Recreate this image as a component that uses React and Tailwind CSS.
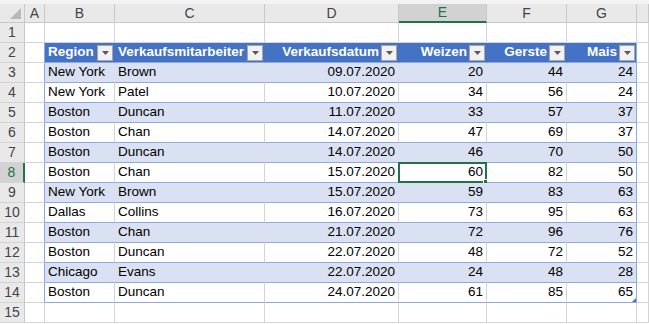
import React from 'react';

const font = { fontFamily: '"Liberation Sans", Arial, sans-serif' };

const colWidths = {
  A: 'w-[20px]',
  B: 'w-[70px]',
  C: 'w-[150px]',
  D: 'w-[134px]',
  E: 'w-[88px]',
  F: 'w-[80px]',
  G: 'w-[70px]',
  H: 'flex-1',
};

const letters = ['A', 'B', 'C', 'D', 'E', 'F', 'G', 'H'];

const headers = [
  { text: 'Region', right: false },
  { text: 'Verkaufsmitarbeiter', right: false },
  { text: 'Verkaufsdatum', right: true },
  { text: 'Weizen', right: true },
  { text: 'Gerste', right: true },
  { text: 'Mais', right: true },
];

const rows = [
  ['New York', 'Brown', '09.07.2020', 20, 44, 24],
  ['New York', 'Patel', '10.07.2020', 34, 56, 24],
  ['Boston', 'Duncan', '11.07.2020', 33, 57, 37],
  ['Boston', 'Chan', '14.07.2020', 47, 69, 37],
  ['Boston', 'Duncan', '14.07.2020', 46, 70, 50],
  ['Boston', 'Chan', '15.07.2020', 60, 82, 50],
  ['New York', 'Brown', '15.07.2020', 59, 83, 63],
  ['Dallas', 'Collins', '16.07.2020', 73, 95, 63],
  ['Boston', 'Chan', '21.07.2020', 72, 96, 76],
  ['Boston', 'Duncan', '22.07.2020', 48, 72, 52],
  ['Chicago', 'Evans', '22.07.2020', 24, 48, 28],
  ['Boston', 'Duncan', '24.07.2020', 61, 85, 65],
];

const FilterButton = () => (
  <div className="w-[16px] h-[16px] shrink-0 bg-[#f2f2f2] border border-[#a6a6a6] flex items-center justify-center">
    <svg width="7" height="4" viewBox="0 0 7 4">
      <polygon points="0,0 7,0 3.5,4" fill="#595959" />
    </svg>
  </div>
);

const RowHeader = ({ n, active }) => (
  <div
    className={
      'w-[25px] shrink-0 h-full flex items-center justify-center text-[14px] border-b border-[#d4d4d4] ' +
      (active
        ? 'bg-[#d2d2d2] text-[#217346] border-r-2 border-r-[#217346]'
        : 'bg-[#e9e9e9] text-[#444] border-r border-r-[#c8c8c8]')
    }
  >
    {n}
  </div>
);

const Cell = ({ col, className = '', children }) => (
  <div className={'h-full shrink-0 border-r border-b flex items-center ' + colWidths[col] + ' ' + className}>
    {children}
  </div>
);

export default function App() {
  return (
    <div className="w-[649px] h-[324px] overflow-hidden bg-white text-black" style={font}>
      <div className="h-[4px] bg-[#f3f3f3]" />

      {/* column headers */}
      <div className="flex h-[19px]">
        <div className="w-[25px] shrink-0 bg-[#e9e9e9] border-r border-b border-[#c8c8c8] relative">
          <svg className="absolute right-[3px] bottom-[3px]" width="11" height="11" viewBox="0 0 11 11">
            <polygon points="11,0 11,11 0,11" fill="#b8b8b8" />
          </svg>
        </div>
        {letters.map((l) => (
          <div
            key={l}
            className={
              'shrink-0 h-full flex items-center justify-center text-[14px] ' +
              colWidths[l] +
              (l === 'E'
                ? ' bg-[#d2d2d2] text-[#217346] border-r border-r-[#c8c8c8] border-b-2 border-b-[#217346]'
                : ' bg-[#e9e9e9] text-[#444] border-r border-b border-[#c8c8c8]')
            }
          >
            {l === 'H' ? '' : l}
          </div>
        ))}
      </div>

      {/* row 1 */}
      <div className="flex h-[20px]">
        <RowHeader n={1} />
        {letters.map((l) => (
          <Cell key={l} col={l} className="border-[#d4d4d4]" />
        ))}
      </div>

      {/* row 2: table header */}
      <div className="flex h-[20px] text-[13.5px]">
        <RowHeader n={2} />
        <Cell col="A" className="border-b-[#d4d4d4] border-r-[#8ea9db]" />
        {headers.map((h, i) => (
          <Cell
            key={h.text}
            col={letters[i + 1]}
            className={
              'bg-[#4472c4] border-b-[#8ea9db] pl-[3px] pr-[1px] gap-[2px] ' +
              (i === 5 ? 'border-r-[#8ea9db]' : 'border-r-[#4472c4]')
            }
          >
            <span className={'flex-1 font-bold text-white whitespace-nowrap ' + (h.right ? 'text-right' : 'text-left')}>
              {h.text}
            </span>
            <FilterButton />
          </Cell>
        ))}
        <Cell col="H" className="border-[#d4d4d4]" />
      </div>

      {/* data rows */}
      {rows.map((r, ri) => {
        const banded = ri % 2 === 0;
        const active = ri === 5;
        const fill = banded ? 'bg-[#d9e1f2] border-r-[#d9e1f2]' : 'bg-white border-r-[#d4d4d4]';
        return (
          <div key={ri} className="flex h-[20px] text-[13.5px]">
            <RowHeader n={ri + 3} active={active} />
            <Cell col="A" className="border-b-[#d4d4d4] border-r-[#8ea9db]" />
            {r.map((v, ci) => {
              const col = letters[ci + 1];
              const left = ci < 2;
              return (
                <Cell
                  key={ci}
                  col={col}
                  className={
                    'relative border-b-[#8ea9db] px-[3px] ' +
                    fill +
                    (ci === 5 ? ' !border-r-[#8ea9db]' : '') +
                    (left ? ' justify-start' : ' justify-end')
                  }
                >
                  <span className="whitespace-nowrap">{v}</span>
                  {active && ci === 3 && (
                    <div className="absolute left-[-1px] top-[-1px] right-[-1px] bottom-[-1px] border-2 border-[#217346]">
                      <div className="absolute right-[-4px] bottom-[-4px] w-[6px] h-[6px] bg-[#217346] border border-white" />
                    </div>
                  )}
                  {ri === rows.length - 1 && ci === 5 && (
                    <svg className="absolute right-0 bottom-0" width="4" height="4" viewBox="0 0 4 4">
                      <polygon points="4,0 4,4 0,4" fill="#4472c4" />
                    </svg>
                  )}
                </Cell>
              );
            })}
            <Cell col="H" className="border-[#d4d4d4]" />
          </div>
        );
      })}

      {/* row 15 */}
      <div className="flex h-[20px]">
        <RowHeader n={15} />
        {letters.map((l) => (
          <Cell key={l} col={l} className="border-[#d4d4d4]" />
        ))}
      </div>
    </div>
  );
}
